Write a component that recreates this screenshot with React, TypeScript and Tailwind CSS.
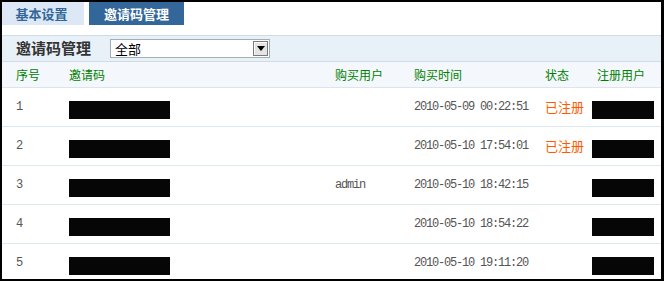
import React from 'react';

const rows = [
  { id: '1', buyer: '', time: '2010-05-09 00:22:51', status: '已注册' },
  { id: '2', buyer: '', time: '2010-05-10 17:54:01', status: '已注册' },
  { id: '3', buyer: 'admin', time: '2010-05-10 18:42:15', status: '' },
  { id: '4', buyer: '', time: '2010-05-10 18:54:22', status: '' },
  { id: '5', buyer: '', time: '2010-05-10 19:11:20', status: '' },
];

const cjk = "font-['SimSun','Noto_Sans_CJK_SC',sans-serif]";
const mono = "font-['Liberation_Mono',monospace] text-[12px] tracking-[-1.2px] text-[#555]";

const App = () => {
  return (
    <div className="h-[281px] w-[664px] overflow-hidden bg-black pl-[2px] pt-[2px] pr-[3px] pb-[2px]">
      <div className={`h-full w-full overflow-hidden bg-white ${cjk}`}>
        {/* tabs */}
        <div className="flex h-[23px] gap-[5px]">
          <div className="flex w-[82px] items-center justify-center bg-[#dce8f5] pr-[3px] text-[13px] font-bold text-[#336699]">
            基本设置
          </div>
          <div className="flex w-[95px] items-center justify-center bg-[#336699] text-[13px] font-bold text-white">
            邀请码管理
          </div>
        </div>

        {/* title bar */}
        <div className="mt-[10px] flex h-[27px] items-center border-y border-[#cfdbe7] bg-[#e8f0f8] pl-[14px]">
          <span className="w-[94px] text-[15px] font-bold text-[#333]">邀请码管理</span>
          <div className="flex h-[19px] w-[160px] items-center border border-[#a5acb2] bg-white">
            <span className="flex-1 pl-[4px] text-[13px] leading-none text-black">全部</span>
            <div className="mr-[1px] flex h-[15px] w-[15px] items-center justify-center border border-[#7a7a7a] bg-[#e4e4e4] shadow-[inset_1px_1px_0_#fff]">
              <svg width="8" height="5" viewBox="0 0 8 5">
                <path d="M0 0h8L4 5z" fill="#000" />
              </svg>
            </div>
          </div>
        </div>

        {/* column header */}
        <div className="flex h-[26px] items-center border-b border-[#dbe5ef] bg-[#f4f8fc] pl-[14px] text-[12px] text-[#008000]">
          <span className="w-[53px]">序号</span>
          <span className="w-[266px]">邀请码</span>
          <span className="w-[79px]">购买用户</span>
          <span className="w-[131px]">购买时间</span>
          <span className="w-[52px]">状态</span>
          <span>注册用户</span>
        </div>

        {rows.map((r) => (
          <div
            key={r.id}
            className="flex h-[39px] items-center border-b border-[#dce8f2] pl-[14px] text-[12px]"
          >
            <span className={`w-[53px] ${mono}`}>{r.id}</span>
            <span className="w-[266px]">
              <span className="mt-[6px] block h-[18px] w-[101px] bg-[#060606]" />
            </span>
            <span className={`w-[79px] ${mono}`}>{r.buyer}</span>
            <span className={`w-[131px] ${mono}`}>{r.time}</span>
            <span className="w-[47px] text-[13px] text-[#ff5a00]">{r.status}</span>
            <span className="block h-[18px] w-[62px] translate-y-[3px] bg-[#060606]" />
          </div>
        ))}
      </div>
    </div>
  );
};

export default App;
